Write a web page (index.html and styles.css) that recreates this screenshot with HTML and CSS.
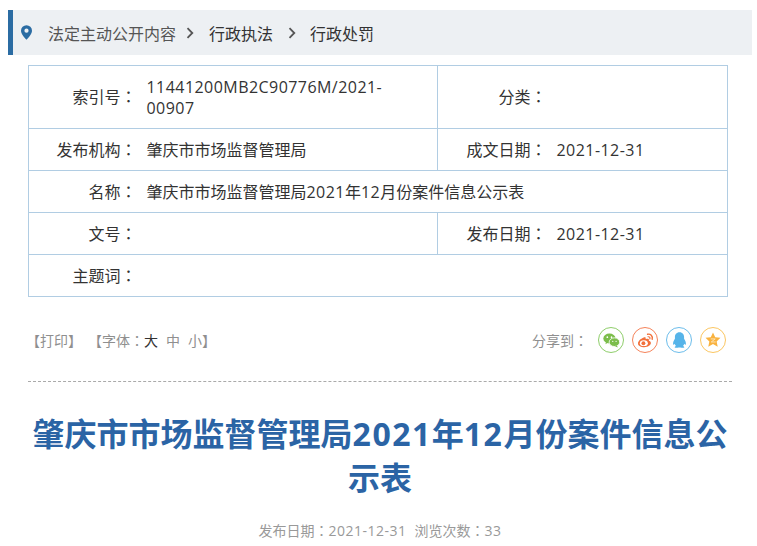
FILE: index.html
```html
<!DOCTYPE html>
<html lang="zh-CN">
<head>
<meta charset="utf-8">
<title>肇庆市市场监督管理局2021年12月份案件信息公示表</title>
<link rel="stylesheet" href="styles.css">
</head>
<body>
<nav class="crumbs">
  <svg class="pin" width="11" height="15" viewBox="0 0 12 16"><path fill="#2b6ca3" fill-rule="evenodd" d="M6 0a6 6 0 0 0-6 6c0 3.600 4 7.600 6 10 2-2.400 6-6.400 6-10a6 6 0 0 0-6-6zm0 3.700a2.300 2.300 0 1 1 0 4.600 2.300 2.300 0 0 1 0-4.600z"/></svg>
  <a class="c1">法定主动公开内容</a>
  <svg class="chev c-a" width="8" height="12" viewBox="0 0 8 12"><path d="M1.500 1.200l4.800 4.800-4.800 4.800" fill="none" stroke="#555" stroke-width="1.800"/></svg>
  <a class="c2">行政执法</a>
  <svg class="chev c-b" width="8" height="12" viewBox="0 0 8 12"><path d="M1.500 1.200l4.800 4.800-4.800 4.800" fill="none" stroke="#555" stroke-width="1.800"/></svg>
  <a class="c2">行政处罚</a>
</nav>
<table class="meta">
  <colgroup><col class="k1"><col class="v1"><col class="k2"><col class="v2"></colgroup>
  <tr class="tall"><th>索引号<span class="co">：</span></th><td><span class="n">11441200MB2C90776M/2021-00907</span></td><th class="sep">分类<span class="co">：</span></th><td></td></tr>
  <tr><th>发布机构<span class="co">：</span></th><td>肇庆市市场监督管理局</td><th class="sep">成文日期<span class="co">：</span></th><td><span class="n">2021-12-31</span></td></tr>
  <tr><th>名称<span class="co">：</span></th><td colspan="3">肇庆市市场监督管理局<span class="n">2021</span>年<span class="n">12</span>月份案件信息公示表</td></tr>
  <tr><th>文号<span class="co">：</span></th><td></td><th class="sep">发布日期<span class="co">：</span></th><td><span class="n">2021-12-31</span></td></tr>
  <tr><th>主题词<span class="co">：</span></th><td colspan="3"></td></tr>
</table>
<div class="tools">
  <div class="print"><span>【打印】</span><span class="font">【字体<span class="co">：</span><b>大</b><i>中</i><i>小</i>】</span></div>
  <div class="share">
    <span class="share-l">分享到<span class="co">：</span></span>
    <span class="ic wx"><svg width="17" height="15" viewBox="0 0 20 18"><ellipse cx="7.500" cy="6.500" rx="7.300" ry="6" fill="#7cbd4b"/><path d="M3.500 10.500l-.8 3 3.300-2z" fill="#7cbd4b"/><ellipse cx="13.500" cy="11" rx="6.300" ry="5.200" fill="#7cbd4b" stroke="#fff"/><path d="M16.500 15l1 2.500-3.300-1.500z" fill="#7cbd4b"/><circle cx="5" cy="5" r="1" fill="#fff"/><circle cx="10" cy="5" r="1" fill="#fff"/><circle cx="11.500" cy="10" r=".8" fill="#fff"/><circle cx="15.500" cy="10" r=".8" fill="#fff"/></svg></span>
    <span class="ic wb"><svg width="17" height="15" viewBox="0 0 20 18"><path d="M8 5.500C4 7 1 10 1 12.500 1 15.500 5 17 8.500 17c4.500 0 8-2.500 8-5 0-2-2-2.500-2.500-2.700.6-1.500.2-3-2.500-2.300-1 .3-1.300.4-1.300 0 .3-1.500-.2-2.500-2.700-1.500z" fill="#f2713c"/><ellipse cx="8" cy="12.200" rx="4.800" ry="3.500" fill="#fff"/><circle cx="7.500" cy="12.300" r="2.300" fill="#f2713c"/><path d="M12.500 1.500c3.500-.7 6.500 2 5.500 6" fill="none" stroke="#f2713c" stroke-width="1.700" stroke-linecap="round"/><path d="M13 4.500c1.700-.3 2.700 1 2.300 2.500" fill="none" stroke="#f2713c" stroke-width="1.400" stroke-linecap="round"/></svg></span>
    <span class="ic qq"><svg width="15" height="17" viewBox="0 0 18 20"><path d="M9 0c3.800 0 5.500 2.800 5.500 6v2c1.500 2.500 2.800 5 2 7-.5.700-1.200-.2-1.800-1.200-.2 1.200-.8 2-1.500 2.700 1 .4 1.800 1 1.500 1.800-.5.700-3 .7-4.700 0H8c-1.700.7-4.200.7-4.700 0-.3-.8.500-1.400 1.500-1.800-.7-.7-1.300-1.500-1.500-2.700-.6 1-1.300 1.900-1.800 1.200-.8-2 .5-4.500 2-7V6C3.500 2.800 5.200 0 9 0z" fill="#56b4e9"/></svg></span>
    <span class="ic qz"><svg width="16" height="16" viewBox="0 0 18 18"><path d="M9 .5l2.500 5.400 5.900.7-4.300 4 1.200 6L9 13.600l-5.300 3 1.200-6-4.300-4 5.900-.7z" fill="#f9b23f"/><path d="M6.500 7.800h5L7 11.200h5" fill="none" stroke="#fde3b5" stroke-width="1.100"/></svg></span>
  </div>
</div>
<h1 class="title">肇庆市市场监督管理局<span class="nt">2021</span>年<span class="nt">12</span>月份案件信息公<br>示表</h1>
<p class="info">发布日期<span class="co">：</span><span class="ni">2021-12-31</span><span class="gap">浏览次数<span class="co">：</span></span><span class="ni">33</span></p>
</body>
</html>
```
FILE: styles.css
```css
* { box-sizing: border-box; }
html, body { height: 546px; overflow: hidden; }
body {
  margin: 0;
  padding: 10px 5px 0 8px;
  background: #fff;
  color: #333;
  font-family: "Open Sans", "Noto Sans CJK SC", sans-serif;
  font-size: 16px;
  text-spacing-trim: space-all;
}
.co { font-family: "Noto Sans CJK TC", sans-serif; font-feature-settings: "locl" 0; }
.n { letter-spacing: .45px; }
.crumbs {
  display: flex;
  align-items: center;
  height: 45px;
  background: #edf0f3;
  border-left: 5px solid #2b6ca3;
  padding-left: 8px;
  color: #333;
}
.pin { margin-right: 16px; }
.c1 { color: #555; }
.c2 { color: #333; }
.chev { margin: 0 15px 0 10px; }
.c-b { margin: 0 14px 0 15px; }
.meta {
  width: 700px;
  margin: 10px 0 0 20px;
  border-collapse: collapse;
  table-layout: fixed;
  line-height: 21px;
  color: #333;
}
.k1 { width: 118px; }
.v1 { width: 291px; }
.k2 { width: 119px; }
.meta tr { height: 42px; }
.meta tr.tall { height: 63px; }
.meta th, .meta td { border: 1px solid #b1cde3; padding: 0; font-weight: normal; }
.meta th { text-align: right; padding-right: 10px; border-right: 0; }
.meta td { border-left: 0; padding: 2px 40px 0 0; text-align: left; }
.meta th.sep { border-left: 1px solid #b1cde3; }
.tools {
  display: flex;
  justify-content: space-between;
  align-items: center;
  margin: 30px 0 0 20px;
  height: 26px;
  width: 698px;
  font-size: 14px;
  color: #8f8f8f;
}
.print { white-space: nowrap; margin-left: -2px; }
.font { margin-left: 6px; }
.font b { font-weight: normal; color: #333; }
.font i { font-style: normal; margin-left: 8px; }
.share { display: flex; align-items: center; gap: 8px; }
.share-l { margin-right: 2px; }
.ic {
  display: flex;
  align-items: center;
  justify-content: center;
  width: 26px;
  height: 26px;
  border-radius: 50%;
  border: 1px solid;
}
.ic svg { display: block; }
.wx { border-color: #8fce6b; }
.wb { border-color: #f5835a; }
.qq { border-color: #6cbdeb; }
.qz { border-color: #fbc661; }
.title {
  margin: 28px 0 0 20px;
  width: 704px;
  padding: 30px 0 0;
  border-top: 1px dashed #aaa;
  font-size: 32px;
  line-height: 44px;
  font-weight: 700;
  color: #2b64a5;
  text-align: center;
}
.nt { letter-spacing: 1.5px; }
.info {
  margin: 20px 0 0;
  text-align: center;
  font-size: 14px;
  line-height: 20px;
  color: #999;
}
.ni { letter-spacing: .5px; }
.gap { margin-left: 8px; }
```
